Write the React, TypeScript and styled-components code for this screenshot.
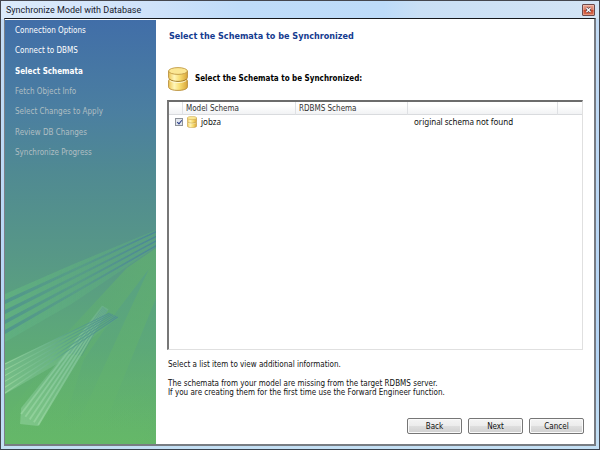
import React from "react";
import styled, { createGlobalStyle } from "styled-components";

const GlobalStyle = createGlobalStyle`
  *, *::before, *::after { box-sizing: border-box; }
  html, body, #root { height: 100%; }
  body {
    margin: 0;
    overflow: hidden;
    font: 8px/9px "DejaVu Sans Condensed", "DejaVu Sans", sans-serif;
    color: #111;
  }
`;

const Window = styled.main`
  height: 100vh;
  display: flex;
  flex-direction: column;
  padding: 1px 3px 3px 3px;
  border: 1px solid #44464e;
  border-bottom-color: #38414c;
  background:
    linear-gradient(90deg, #dcebfb 0, #cfe2fa 25%, #bfdcf9 40%, #bddbf9 64%, #c9dff5 70%, #d3e4f5 100%) top / 100% 18px no-repeat,
    linear-gradient(#c4dcf5, #b5d5f5 80%, #c4e0f4);
`;

const TitleBar = styled.header`
  height: 16px;
  flex: none;
  display: flex;
  align-items: center;
  justify-content: space-between;
  padding: 0 1px 0 2px;
`;

const Title = styled.h1`
  margin: 0;
  font: 400 9px/14px Roboto, sans-serif;
  color: #17202c;
`;

const CloseButton = styled.button`
  width: 13px;
  height: 12px;
  padding: 0;
  display: grid;
  place-items: center;
  border: 1px solid #6d4a4c;
  border-radius: 1px;
  background: linear-gradient(#e9a593 0, #dc7f68 45%, #c6452a 50%, #dc7355 100%);
  box-shadow: inset 0 0 0 1px #ffffff44;
`;

const Client = styled.div`
  flex: 1;
  min-height: 0;
  display: flex;
  border: 1px solid #7b8088;
  border-top-color: #16181c;
  border-right: 2px solid #777b82;
  border-bottom: 2px solid #787d83;
  background: #fff;
`;

const Sidebar = styled.nav`
  width: 26%;
  min-width: 150px;
  max-width: 151px;
  margin-top: 1px;
  display: flex;
  flex-direction: column;
  justify-content: space-between;
  background: linear-gradient(#416ea8 0, #4b7fa0 22%, #508a92 36%, #579787 55%, #5ca67b 72%, #62b26d 90%, #65b868 100%);
`;

const Steps = styled.ol`
  list-style: none;
  margin: 0;
  padding: 0 0 0 10px;
  height: 143px;
  display: grid;
  grid-auto-rows: 1fr;
  align-items: center;
`;

const Step = styled.li<{ $state: "done" | "current" | "pending" }>`
  color: ${(p) => (p.$state === "pending" ? "#b0bec2" : "#fff")};
  font-weight: ${(p) => (p.$state === "current" ? 700 : 400)};
`;

const Artwork = styled.svg`
  display: block;
  width: 100%;
  height: 214px;
`;

const Content = styled.section`
  flex: 1;
  min-width: 0;
  display: flex;
  flex-direction: column;
  padding: 12px 10px 10px 11px;
`;

const PageTitle = styled.h2`
  margin: 0 0 26px 2px;
  font-size: 9px;
  line-height: 10px;
  font-weight: 700;
  color: #143b8f;
`;

const SectionTitle = styled.h3`
  margin: 0 0 9px 1px;
  display: flex;
  align-items: center;
  gap: 7px;
  font-size: 8px;
  line-height: 10px;
  font-weight: 700;
  color: #000;
`;

const ListBox = styled.div`
  flex: 1;
  min-height: 0;
  margin-right: 1px;
  border: 1px solid #e0e0e0;
  border-top: 2px solid #6c6c6c;
  border-left: 2px solid #777;
`;

const Table = styled.table`
  width: 100%;
  table-layout: fixed;
  border-collapse: separate;
  border-spacing: 0;
`;

const Col = styled.col<{ $width?: number }>`
  width: ${(p) => (p.$width ? `${p.$width}px` : "auto")};
`;

const HeadCell = styled.th`
  height: 13px;
  padding: 0 0 0 3px;
  text-align: left;
  font-weight: 400;
  color: #333;
  border-right: 1px solid #dfe1e4;
  border-bottom: 1px solid #d9dbde;
  background: linear-gradient(#fff 30%, #f1f2f4);
  &:last-child { border-right: 0; }
`;

const Cell = styled.td`
  height: 13px;
  padding: 0 0 0 6px;
  font: 400 8px/10px "Noto Sans", sans-serif;
  white-space: nowrap;
`;

const SchemaLabel = styled.label`
  display: flex;
  align-items: center;
  gap: 4px;
`;

const CheckBox = styled.input`
  appearance: none;
  width: 8px;
  height: 8px;
  margin: 0;
  border: 1px solid #8d9299;
  background: #e3e7ee;
  display: grid;
  place-items: center;
  &:checked::after {
    content: "";
    width: 3px;
    height: 5px;
    border: solid #2c3f87;
    border-width: 0 1px 1px 0;
    transform: rotate(40deg);
  }
`;

const Notes = styled.div`
  padding: 10px 0 21px 1px;
`;

const Note = styled.p`
  margin: 0 0 10px;
  &:last-child { margin: 0; }
`;

const Footer = styled.footer`
  display: flex;
  justify-content: flex-end;
  gap: 6px;
`;

const Button = styled.button`
  width: 55px;
  height: 16px;
  padding: 0;
  font: inherit;
  color: #111;
  border: 1px solid #767676;
  border-radius: 2px;
  background: linear-gradient(#f4f4f4 0, #ececec 48%, #dedede 52%, #d0d0d0 100%);
  box-shadow: inset 0 0 0 1px #fafafa;
`;

function DatabaseIcon({ width, height }: { width: number; height: number }) {
  const id = `gold-${width}`;
  return (
    <svg width={width} height={height} viewBox="0 0 20 24" aria-hidden="true">
      <defs>
        <linearGradient id={id}>
          <stop offset="0" stopColor="#eec657" />
          <stop offset="0.3" stopColor="#fff6b8" />
          <stop offset="0.6" stopColor="#f7dc70" />
          <stop offset="1" stopColor="#d9a63a" />
        </linearGradient>
      </defs>
      <path d="M.6 4v6.500c0 .800.400 1.300 1 1.700-.6.400-1 1-1 1.700v6C.6 22 4.500 23.400 10 23.400s9.400-1.400 9.400-3.500v-6c0-.700-.4-1.300-1-1.700.6-.4 1-.9 1-1.700V4z" fill={`url(#${id})`} stroke="#b58a35" strokeWidth="0.900" />
      <path d="M1.600 12.200C3.500 13.800 6.500 14.400 10 14.400s6.500-.6 8.400-2.200" fill="none" stroke="#a07a2c" strokeWidth="1" />
      <path d="M1.800 13.600C4 15 6.500 15.500 10 15.500s6-.5 8.200-1.900" fill="none" stroke="#fffbdc" strokeWidth="0.900" />
      <ellipse cx="10" cy="4" rx="9.400" ry="3.400" fill="#fbe794" stroke="#c19a45" strokeWidth="0.900" />
    </svg>
  );
}

const rays = (count: number, draw: (t: number) => string) =>
  Array.from({ length: count }, (_, i) => draw(i / (count - 1)));

function SidebarArtwork() {
  return (
    <Artwork viewBox="0 0 150 214" preserveAspectRatio="none" aria-hidden="true">
      <defs>
        <linearGradient id="field" gradientUnits="userSpaceOnUse" x1="150" y1="50" x2="50" y2="120">
          <stop offset="0" stopColor="#62b26c" stopOpacity="0.650" />
          <stop offset="0.600" stopColor="#62b26c" stopOpacity="0.400" />
          <stop offset="1" stopColor="#65b868" stopOpacity="0.150" />
        </linearGradient>
        <linearGradient id="shade" gradientUnits="userSpaceOnUse" x1="0" y1="40" x2="0" y2="200">
          <stop offset="0" stopColor="#57a085" stopOpacity="0.850" />
          <stop offset="0.500" stopColor="#5ba67b" stopOpacity="0.650" />
          <stop offset="1" stopColor="#62b26d" stopOpacity="0" />
        </linearGradient>
        <linearGradient id="band" x1="0" y1="0" x2="1" y2="0">
          <stop offset="0" stopColor="#60b080" stopOpacity="0.900" />
          <stop offset="1" stopColor="#5ba67f" stopOpacity="0.600" />
        </linearGradient>
        <linearGradient id="wide" x1="0" y1="0" x2="1" y2="0">
          <stop offset="0" stopColor="#4f948c" stopOpacity="0.900" />
          <stop offset="0.500" stopColor="#55998a" stopOpacity="0.700" />
          <stop offset="1" stopColor="#4b8698" />
        </linearGradient>
        <linearGradient id="glow" gradientUnits="userSpaceOnUse" x1="0" y1="190" x2="70" y2="80">
          <stop offset="0" stopColor="#8fd09a" stopOpacity="0.650" />
          <stop offset="0.600" stopColor="#7fc49a" stopOpacity="0.350" />
          <stop offset="1" stopColor="#6cb48a" stopOpacity="0.200" />
        </linearGradient>
        <linearGradient id="shaft" gradientUnits="userSpaceOnUse" x1="20" y1="190" x2="100" y2="78">
          <stop offset="0" stopColor="#9bd8a2" stopOpacity="0.700" />
          <stop offset="0.600" stopColor="#8ccba6" stopOpacity="0.600" />
          <stop offset="1" stopColor="#7cbb9f" stopOpacity="0.350" />
        </linearGradient>
        <linearGradient id="thin" gradientUnits="userSpaceOnUse" x1="0" y1="0" x2="112" y2="0">
          <stop offset="0" stopColor="#9bd69e" stopOpacity="0.850" />
          <stop offset="0.300" stopColor="#79bf94" stopOpacity="0.600" />
          <stop offset="0.550" stopColor="#56a088" stopOpacity="0.800" />
          <stop offset="1" stopColor="#4c8c92" stopOpacity="0.850" />
        </linearGradient>
        <filter id="soft"><feGaussianBlur stdDeviation="0.700" /></filter>
      </defs>
      <path d="M150 18 121 38 64 100 0 190V214H150z" fill="url(#field)" />
      <path d="M143 39 112 80 78 130 55 204H68L124 80z" fill="url(#shade)" />
      <path d="M150 68V204H94L102 187z" fill="url(#shade)" />
      <g filter="url(#soft)">
        <path d="M150 0 66 35 0 64V112L66 74 150 17z" fill="url(#band)" />
        {rays(4, (t) => `M150 ${1 + t * 14}L150 ${2.5 + t * 14}L0 ${74 + t * 30}L0 ${70 + t * 30}z`).map((d) => (
          <path key={d} d={d} fill="url(#wide)" />
        ))}
      </g>
      <g filter="url(#soft)">
        <path d="M97 76 103 79 56 155 33 196 15 194 16 178z" fill="url(#glow)" />
        <path d="M104 83 112 88 60 129 0 164V133z" fill="url(#glow)" />
      </g>
      {rays(5, (t) => `M${97 + t * 5} ${76 + t * 3}L${16 + t * 17} ${184 + t * 11}`).map((d) => (
        <path key={d} d={d} stroke="url(#shaft)" strokeWidth="1.800" />
      ))}
      {rays(5, (t) => `M${97.5 + t * 4} ${77 + t * 3}L${64 + t * 12} ${124 + t * 2}`).map((d) => (
        <path key={d} d={d} stroke="#4f8f91" strokeWidth="0.700" opacity="0.550" />
      ))}
      {rays(6, (t) => `M${104 + t * 8} ${83 + t * 4}L0 ${134 + t * 29}`).map((d) => (
        <path key={d} d={d} stroke="url(#thin)" strokeWidth="1.100" />
      ))}
    </Artwork>
  );
}

const steps: { label: string; state: "done" | "current" | "pending" }[] = [
  { label: "Connection Options", state: "done" },
  { label: "Connect to DBMS", state: "done" },
  { label: "Select Schemata", state: "current" },
  { label: "Fetch Object Info", state: "pending" },
  { label: "Select Changes to Apply", state: "pending" },
  { label: "Review DB Changes", state: "pending" },
  { label: "Synchronize Progress", state: "pending" },
];

export default function App() {
  return (
    <>
      <GlobalStyle />
      <Window>
        <TitleBar>
          <Title>Synchronize Model with Database</Title>
          <CloseButton type="button" aria-label="Close">
            <svg width="7" height="6" viewBox="0 0 7 6" aria-hidden="true">
              <path d="M1.500 1 5.500 5M5.500 1 1.500 5" stroke="#5a3d48" strokeWidth="2.600" />
              <path d="M1.500 1 5.500 5M5.500 1 1.500 5" stroke="#fff" strokeWidth="1.300" />
            </svg>
          </CloseButton>
        </TitleBar>
        <Client>
          <Sidebar aria-label="Steps">
            <Steps>
              {steps.map((s) => (
                <Step key={s.label} $state={s.state} aria-current={s.state === "current" ? "step" : undefined}>
                  {s.label}
                </Step>
              ))}
            </Steps>
            <SidebarArtwork />
          </Sidebar>
          <Content>
            <PageTitle>Select the Schemata to be Synchronized</PageTitle>
            <SectionTitle>
              <DatabaseIcon width={20} height={24} />
              Select the Schemata to be Synchronized:
            </SectionTitle>
            <ListBox>
              <Table>
                <colgroup>
                  <Col $width={14} />
                  <Col $width={113} />
                  <Col $width={112} />
                  <Col $width={150} />
                  <Col />
                </colgroup>
                <thead>
                  <tr>
                    <HeadCell />
                    <HeadCell>Model Schema</HeadCell>
                    <HeadCell>RDBMS Schema</HeadCell>
                    <HeadCell />
                    <HeadCell />
                  </tr>
                </thead>
                <tbody>
                  <tr>
                    <Cell colSpan={2}>
                      <SchemaLabel>
                        <CheckBox type="checkbox" defaultChecked />
                        <DatabaseIcon width={10} height={12} />
                        jobza
                      </SchemaLabel>
                    </Cell>
                    <Cell />
                    <Cell>original schema not found</Cell>
                    <Cell />
                  </tr>
                </tbody>
              </Table>
            </ListBox>
            <Notes>
              <Note>Select a list item to view additional information.</Note>
              <Note>
                The schemata from your model are missing from the target RDBMS server.
                <br />
                If you are creating them for the first time use the Forward Engineer function.
              </Note>
            </Notes>
            <Footer>
              <Button type="button">Back</Button>
              <Button type="button">Next</Button>
              <Button type="button">Cancel</Button>
            </Footer>
          </Content>
        </Client>
      </Window>
    </>
  );
}
